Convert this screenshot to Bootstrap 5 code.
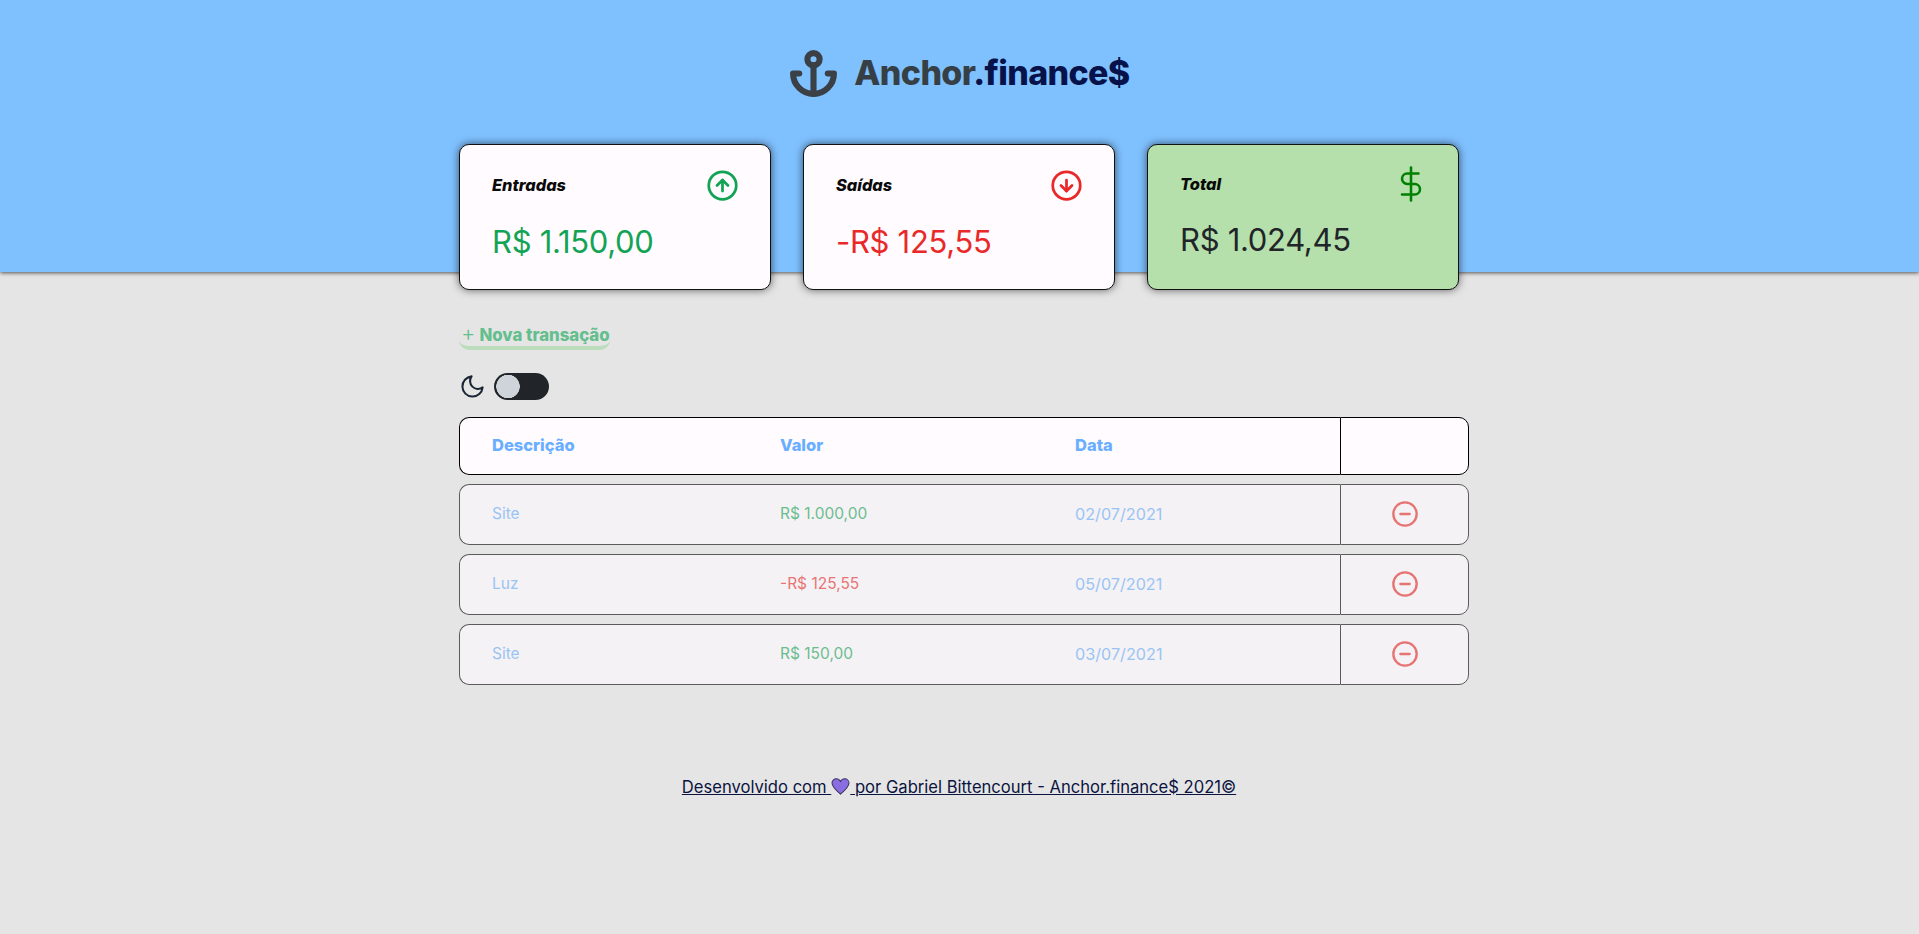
<!DOCTYPE html>
<html lang="pt-BR">
<head>
<meta charset="utf-8">
<title>Anchor.finance$</title>
<link href="https://cdn.jsdelivr.net/npm/bootstrap@5.3.0/dist/css/bootstrap.min.css" rel="stylesheet">
<style>
body{background:#e5e5e5;font-family:"Inter","Liberation Sans",sans-serif;min-height:934px;color:#212529}
.top-band{height:272px;background:#7fc1ff;box-shadow:0 1px 4px rgba(0,0,0,.65);padding-top:49px}
.logo-word{font-size:34px;font-weight:800;letter-spacing:-.65px;line-height:48px;color:#363f45;margin-left:16px}
.logo-word span{color:#07124a}
.page-wrap{width:1000px;margin:-128px 0 0 459px;position:relative}
.sum-grid{display:grid;grid-template-columns:repeat(3,312px);gap:32px}
.sum-card{height:146px;background:#fffbff;border:1.5px solid #111;border-radius:10px;box-shadow:0 0 8px rgba(0,0,0,.6);padding:24px 31px 0 32px}
.sum-card.is-total{background:#b5dfab}
.sum-label{font-size:16.400px;font-weight:800;font-style:italic;color:#0a0a0a;margin-top:-1px}
.sum-value{font-size:31px;line-height:44px;margin-top:18px;font-weight:400;letter-spacing:-.3px}
.val-in{color:#12a454}.val-out{color:#e92929}.val-total{color:#212529}
.dollar-icon{margin:-3px -2px -2px 0}
.new-link{display:inline-block;margin-top:33px;color:#45b578;opacity:.8;font-weight:800;font-size:16.8px;line-height:21px;text-decoration:none;border-bottom:4px solid #b3dcb3;border-radius:0 0 10px 10px;width:151px;white-space:nowrap}
.new-link .plus{font-weight:300;font-size:22px;line-height:21px;margin:0 4px 0 2px}
.mode-row{margin-top:23px;height:27px}
.mode-row .form-check-input{width:55px;height:27px;margin:0 0 0 8px;border:0;float:none;background-color:#212529;background-image:radial-gradient(circle at 14px 50%,#ced4da 11.5px,transparent 12px);background-position:0 0;background-size:auto;border-radius:14px}
.mode-row .form-switch{padding:0;margin:0;min-height:0;display:flex}
.tx-table{width:1010px;max-width:1010px;margin:7.5px 0 0;border-collapse:separate;border-spacing:0 9px;table-layout:fixed}
.tx-table th,.tx-table td{background:#fffbff;border-style:solid;border-color:#000;border-width:1.5px 0;padding:0 0 0 32px;vertical-align:middle;box-shadow:none}
.tx-table th{height:58px;font-size:16.5px;font-weight:800;color:#69aeff}
.tx-table td{height:61px;font-size:15.5px;font-weight:400;border-width:1px 0;color:#69aeff}
.tx-table td.date-cell{font-size:16.2px}
.tx-table tbody tr{opacity:.6}
.tx-table tr>:first-child{border-left-width:1.5px;border-radius:10px 0 0 10px}
.tx-table td:first-child{border-left-width:1px}
.tx-table tr>:last-child{border-left-width:1px;border-right-width:1.5px;border-radius:0 10px 10px 0;padding:0;text-align:center}
.tx-table td:last-child{border-right-width:1px}
.tx-table td.amt-in{color:#12a454}.tx-table td.amt-out{color:#e92929}
.foot-line{margin-top:81px;text-align:center;font-size:16.6px;line-height:24px}
.foot-line a{color:#0b1440;text-decoration:underline}
.foot-line svg{vertical-align:-2px}
</style>
</head>
<body>
<header class="top-band d-flex justify-content-center align-items-start">
  <svg width="49" height="49" viewBox="0 0 24 24" fill="none" stroke="#3a4045" stroke-width="3" stroke-linecap="round" stroke-linejoin="round"><circle cx="12" cy="5" r="3"/><line x1="12" y1="22" x2="12" y2="8"/><path d="M5 12H2a10 10 0 0 0 20 0h-3"/></svg>
  <div class="logo-word">Anchor<span>.finance$</span></div>
</header>
<main class="page-wrap">
  <section class="sum-grid">
    <div class="sum-card">
      <div class="d-flex justify-content-between align-items-center"><span class="sum-label">Entradas</span>
        <svg width="33" height="33" viewBox="0 0 24 24" fill="none" stroke="#12a454" stroke-width="2" stroke-linecap="round" stroke-linejoin="round"><circle cx="12" cy="12" r="10"/><polyline points="16 12 12 8 8 12"/><line x1="12" y1="16" x2="12" y2="8"/></svg></div>
      <div class="sum-value val-in">R$ 1.150,00</div>
    </div>
    <div class="sum-card">
      <div class="d-flex justify-content-between align-items-center"><span class="sum-label">Saídas</span>
        <svg width="33" height="33" viewBox="0 0 24 24" fill="none" stroke="#e92929" stroke-width="2" stroke-linecap="round" stroke-linejoin="round"><circle cx="12" cy="12" r="10"/><polyline points="8 12 12 16 16 12"/><line x1="12" y1="8" x2="12" y2="16"/></svg></div>
      <div class="sum-value val-out">-R$ 125,55</div>
    </div>
    <div class="sum-card is-total">
      <div class="d-flex justify-content-between align-items-center"><span class="sum-label">Total</span>
        <svg class="dollar-icon" width="36" height="36" viewBox="0 0 24 24" fill="none" stroke="#008000" stroke-width="1.7" stroke-linecap="round" stroke-linejoin="round"><line x1="12" y1="1" x2="12" y2="23"/><path d="M17 5H9.5a3.5 3.5 0 0 0 0 7h5a3.5 3.5 0 0 1 0 7H6"/></svg></div>
      <div class="sum-value val-total">R$ 1.024,45</div>
    </div>
  </section>
  <a href="#" class="new-link"><span class="plus">+</span>Nova transação</a>
  <div class="mode-row d-flex align-items-center">
    <svg class="ms-0" width="27" height="27" viewBox="0 0 24 24" fill="none" stroke="#1b2635" stroke-width="1.8" stroke-linecap="round" stroke-linejoin="round"><path d="M21 12.79A9 9 0 1 1 11.21 3 7 7 0 0 0 21 12.79z"/></svg>
    <div class="form-check form-switch"><input class="form-check-input" type="checkbox" role="switch" aria-label="Modo escuro"></div>
  </div>
  <table class="table tx-table">
    <colgroup><col style="width:289px"><col style="width:295px"><col style="width:297px"><col></colgroup>
    <thead><tr><th>Descrição</th><th>Valor</th><th>Data</th><th></th></tr></thead>
    <tbody>
      <tr><td>Site</td><td class="amt-in">R$ 1.000,00</td><td class="date-cell">02/07/2021</td><td><svg width="28" height="28" viewBox="0 0 24 24" fill="none" stroke="#e92929" stroke-width="2" stroke-linecap="round"><circle cx="12" cy="12" r="10"/><line x1="8" y1="12" x2="16" y2="12"/></svg></td></tr>
      <tr><td>Luz</td><td class="amt-out">-R$ 125,55</td><td class="date-cell">05/07/2021</td><td><svg width="28" height="28" viewBox="0 0 24 24" fill="none" stroke="#e92929" stroke-width="2" stroke-linecap="round"><circle cx="12" cy="12" r="10"/><line x1="8" y1="12" x2="16" y2="12"/></svg></td></tr>
      <tr><td>Site</td><td class="amt-in">R$ 150,00</td><td class="date-cell">03/07/2021</td><td><svg width="28" height="28" viewBox="0 0 24 24" fill="none" stroke="#e92929" stroke-width="2" stroke-linecap="round"><circle cx="12" cy="12" r="10"/><line x1="8" y1="12" x2="16" y2="12"/></svg></td></tr>
    </tbody>
  </table>
  <footer class="foot-line"><a href="#">Desenvolvido com <svg width="19" height="17" viewBox="0 0 24 22"><path d="M12 21C5 15 1 11 1 6.500 1 3.500 3.500 1 6.500 1 9 1 11 2.500 12 4.500 13 2.500 15 1 17.500 1 20.500 1 23 3.500 23 6.500 23 11 19 15 12 21z" fill="#8a6de0" stroke="#3b3560" stroke-width="1.300"/></svg> por Gabriel Bittencourt - Anchor.finance$ 2021©</a></footer>
</main>
<script src="https://cdn.jsdelivr.net/npm/bootstrap@5.3.0/dist/js/bootstrap.bundle.min.js"></script>
</body>
</html>
